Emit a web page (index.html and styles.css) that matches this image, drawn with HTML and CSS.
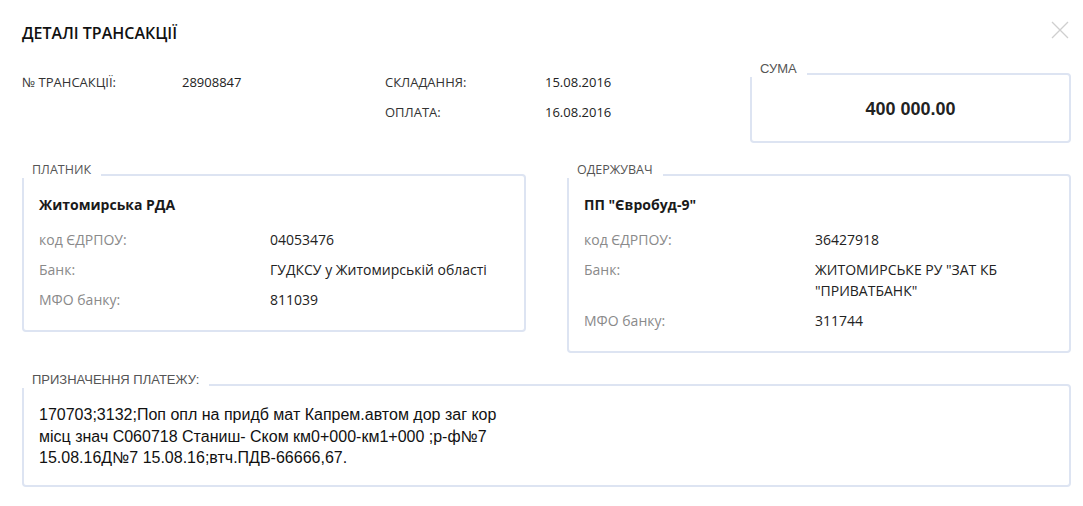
FILE: index.html
```html
<!DOCTYPE html>
<html lang="uk">

<head>
  <meta charset="UTF-8" />
  <title>Деталі трансакції</title>
  <link rel="stylesheet" href="styles.css">
</head>

<body>
  <div class="transaction-modal">
    <div class="modal-header">
      <h1>ДЕТАЛІ ТРАНСАКЦІЇ</h1>
      <button class="close-btn" type="button" aria-label="Закрити">
        <svg width="18" height="18" viewBox="0 0 18 18">
          <path d="M1 1 L17 17 M17 1 L1 17" stroke="#cfcfcf" stroke-width="1.3" fill="none" />
        </svg>
      </button>
    </div>

    <div class="summary">
      <div class="info-grid first">
        <span class="info-label">№ ТРАНСАКЦІЇ:</span>
        <span class="info-value">28908847</span>
      </div>
      <div class="info-grid second">
        <span class="info-label">СКЛАДАННЯ:</span>
        <span class="info-value">15.08.2016</span>
        <span class="info-label">ОПЛАТА:</span>
        <span class="info-value">16.08.2016</span>
      </div>
      <div class="box amount-box">
        <span class="box-title alt">СУМА</span>
        <div class="amount">400 000.00</div>
      </div>
    </div>

    <div class="parties">
      <div class="box party">
        <span class="box-title">ПЛАТНИК</span>
        <div class="party-name">Житомирська РДА</div>
        <div class="party-grid">
          <span class="party-label">код ЄДРПОУ:</span>
          <span class="party-value">04053476</span>
          <span class="party-label">Банк:</span>
          <span class="party-value">ГУДКСУ у Житомирській області</span>
          <span class="party-label">МФО банку:</span>
          <span class="party-value">811039</span>
        </div>
      </div>

      <div class="box party">
        <span class="box-title">ОДЕРЖУВАЧ</span>
        <div class="party-name">ПП "Євробуд-9"</div>
        <div class="party-grid">
          <span class="party-label">код ЄДРПОУ:</span>
          <span class="party-value">36427918</span>
          <span class="party-label">Банк:</span>
          <span class="party-value">ЖИТОМИРСЬКЕ РУ "ЗАТ КБ "ПРИВАТБАНК"</span>
          <span class="party-label">МФО банку:</span>
          <span class="party-value">311744</span>
        </div>
      </div>
    </div>

    <div class="box purpose">
      <span class="box-title alt">ПРИЗНАЧЕННЯ ПЛАТЕЖУ:</span>
      <p class="purpose-text">170703;3132;Поп опл на придб мат Капрем.автом дор заг кор місц знач С060718 Станиш- Ском км0+000-км1+000 ;р-ф№7 15.08.16Д№7 15.08.16;втч.ПДВ-66666,67.</p>
    </div>
  </div>
</body>

</html>
```

FILE: styles.css
```css
/* Transaction details modal */

body {
  margin: 0;
  background-color: #ffffff;
  color: #222222;
  font-family: 'Open Sans', sans-serif;
}

.transaction-modal {
  width: 1049px;
  padding: 22px 12px 20px 22px;
}

.modal-header {
  display: flex;
  justify-content: space-between;
  align-items: flex-start;
}

.modal-header h1 {
  margin: 0;
  font-size: 16px;
  line-height: 22px;
  font-weight: 600;
  color: #111111;
}

.close-btn {
  border: 0;
  background: none;
  padding: 0;
  margin: -1px 2px 0 0;
  cursor: pointer;
}

.close-btn svg {
  display: block;
}

/* top summary */

.summary {
  display: flex;
  align-items: flex-start;
  margin-top: 28px;
}

.info-grid {
  display: grid;
  grid-template-columns: 160px 1fr;
  row-gap: 9px;
  font-size: 13px;
  line-height: 21px;
}

.info-grid.first {
  width: 363px;
}

.info-grid.second {
  width: 365px;
}

.info-label {
  color: #333333;
}

.info-value {
  color: #222222;
}

/* bordered boxes with a label on the frame */

.box {
  position: relative;
  border: 2px solid #dde4f2;
  border-radius: 4px;
  box-sizing: border-box;
}

.box-title {
  position: absolute;
  top: -14px;
  left: -2px;
  padding: 0 10px;
  background-color: #ffffff;
  font-size: 12.5px;
  line-height: 16px;
  color: #555555;
}

.box-title.alt {
  font-family: 'Liberation Sans', Arial, sans-serif;
  font-size: 13px;
}

.amount-box {
  flex: 1;
  height: 70px;
  margin-top: 1px;
  display: flex;
  align-items: center;
  justify-content: center;
}

.amount {
  font-family: 'Liberation Sans', Arial, sans-serif;
  font-size: 18px;
  font-weight: bold;
  color: #222222;
  margin-top: 2px;
}

/* payer / receiver */

.parties {
  display: flex;
  align-items: flex-start;
  gap: 41px;
  margin-top: 31px;
}

.party {
  flex: 1;
  padding: 18px 15px 20px;
}

.party-name {
  font-size: 14px;
  line-height: 21px;
  font-weight: 700;
  color: #1a1a1a;
  margin-bottom: 14px;
}

.party-grid {
  display: grid;
  grid-template-columns: 231px 1fr;
  row-gap: 9px;
  font-size: 14px;
  line-height: 21px;
}

.party-label {
  color: #8a8a8a;
}

.party-value {
  color: #222222;
}

/* purpose */

.purpose {
  margin-top: 31px;
  padding: 18px 15px 16px;
}

.purpose-text {
  margin: 0;
  max-width: 480px;
  font-family: 'Liberation Sans', Arial, sans-serif;
  font-size: 16px;
  line-height: 21.5px;
  color: #111111;
}
```
